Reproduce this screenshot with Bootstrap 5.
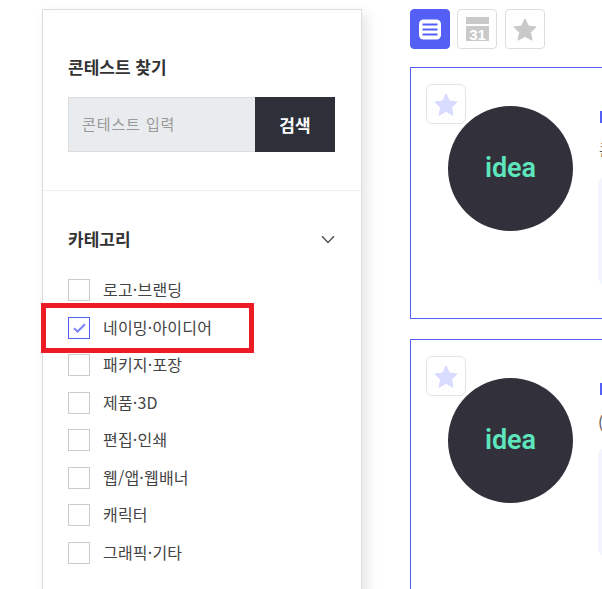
<!DOCTYPE html>
<html lang="ko">
<head>
  <meta charset="UTF-8" />
  <meta name="viewport" content="width=device-width, initial-scale=1.0" />
  <title>콘테스트 찾기</title>
  <link href="https://cdn.jsdelivr.net/npm/bootstrap@5.3.3/dist/css/bootstrap.min.css" rel="stylesheet" />
  <style>
    html, body {
      height: 589px;
      overflow: hidden;
    }
    body {
      font-family: "Noto Sans CJK KR", "Noto Sans", sans-serif;
      background: #fff;
      color: #333;
    }
    .page-wrap {
      width: 602px;
      height: 589px;
      overflow: hidden;
      padding: 9px 0 0 42px;
      gap: 48px;
    }
    .side-panel {
      width: 320px;
      flex: none;
      height: 640px;
      border: 1px solid #ddd;
      box-shadow: 5px 5px 12px rgba(0, 0, 0, .1);
    }
    .search-box {
      padding: 45px 26px 38px 25px;
      border-bottom: 1px solid #eee;
    }
    .panel-title {
      font-size: 17px;
      font-weight: 700;
      line-height: 24px;
      color: #333;
    }
    .search-row {
      height: 55px;
      margin-top: 18px;
    }
    .search-input {
      flex: 1;
      min-width: 0;
      background: #e9ecef;
      border: 1px solid #ddd;
      border-right: 0;
      border-radius: 0;
      padding: 0 13px;
      font-size: 15px;
      letter-spacing: .9px;
    }
    .search-input::placeholder {
      color: #999;
      opacity: 1;
    }
    .search-btn {
      width: 80px;
      background: #2d3039;
      color: #fff;
      font-size: 17px;
      font-weight: 700;
      border: 0;
      border-radius: 0;
    }
    .cat-box {
      padding: 36px 26px 0 25px;
    }
    .cat-list {
      margin-top: 28px;
      gap: 15.5px;
    }
    .cat-item {
      height: 22px;
      gap: 13px;
      font-size: 16px;
      letter-spacing: .2px;
      line-height: 22px;
      color: #444;
    }
    .cat-name {
      margin-top: -2px;
    }
    .tick-box {
      width: 22px;
      height: 22px;
      flex: none;
      border: 1px solid #ccc;
      background: #fff;
    }
    .tick-box.on {
      border-color: #5460f5;
    }
    .red-mark {
      position: absolute;
      left: -2px;
      top: 293px;
      width: 213px;
      height: 50px;
      border: 5px solid #ed1c24;
    }
    .view-btns {
      gap: 7px;
      height: 40px;
    }
    .view-btn {
      width: 40px;
      height: 40px;
      border: 1px solid #ddd;
      border-radius: 4px;
      background: #fff;
    }
    .view-btn:last-child {
      margin-left: 1px;
    }
    .view-btn.on {
      background: #5460f5;
      border-color: #5460f5;
    }
    .contest-col {
      width: 300px;
      flex: none;
    }
    .contest-item {
      width: 300px;
      height: 252px;
      margin-top: 18px;
      border: 1px solid #5460f5;
    }
    .contest-item + .contest-item {
      margin-top: 20px;
      height: 300px;
    }
    .star-btn {
      position: absolute;
      left: 15px;
      top: 16px;
      width: 40px;
      height: 40px;
      border: 1px solid #e4e4e4;
      border-radius: 6px;
      background: #fff;
      z-index: 2;
    }
    .idea-logo {
      position: absolute;
      left: 37px;
      top: 38px;
      width: 125px;
      height: 125px;
      padding-bottom: 1px;
      background: #32303b;
      color: #5de6bb;
      font-family: Roboto, sans-serif;
      font-size: 27px;
      font-weight: 600;
    }
    .item-tag {
      position: absolute;
      left: 189px;
      top: 43px;
      width: 12px;
      height: 12px;
      background: #5460f5;
    }
    .item-text {
      position: absolute;
      left: 188px;
      top: 70px;
      font-size: 16px;
      line-height: 22px;
      white-space: nowrap;
      color: #555;
    }
    .contest-item + .contest-item .item-text {
      left: 187px;
      top: 71px;
    }
    .item-note {
      position: absolute;
      left: 187px;
      top: 109px;
      width: 130px;
      height: 108px;
      background: #f2f4fe;
      border-radius: 8px;
    }
    .contest-item + .contest-item .item-note {
      top: 108px;
    }
  </style>
</head>
<body>

  <div class="page-wrap d-flex">

    <!-- left filter panel -->
    <div class="side-panel position-relative bg-white">
      <div class="search-box">
        <div class="panel-title">콘테스트 찾기</div>
        <div class="search-row d-flex">
          <input type="text" class="search-input form-control" placeholder="콘테스트 입력" />
          <button type="button" class="search-btn btn">검색</button>
        </div>
      </div>

      <div class="cat-box">
        <div class="d-flex justify-content-between align-items-center">
          <div class="panel-title">카테고리</div>
          <svg width="14" height="9" viewBox="0 0 14 9"><path d="M1 1.2 7 7.4l6-6.2" fill="none" stroke="#555" stroke-width="1.5"/></svg>
        </div>
        <div class="cat-list d-flex flex-column">
          <div class="cat-item d-flex align-items-center"><span class="tick-box"></span><span class="cat-name">로고·브랜딩</span></div>
          <div class="cat-item d-flex align-items-center">
            <span class="tick-box on d-flex align-items-center justify-content-center">
              <svg width="13" height="10" viewBox="0 0 13 10"><path d="M1 5.2 4.6 8.5 12 1.2" fill="none" stroke="#7a83f7" stroke-width="2"/></svg>
            </span><span class="cat-name">네이밍·아이디어</span>
          </div>
          <div class="cat-item d-flex align-items-center"><span class="tick-box"></span><span class="cat-name">패키지·포장</span></div>
          <div class="cat-item d-flex align-items-center"><span class="tick-box"></span><span class="cat-name">제품·3D</span></div>
          <div class="cat-item d-flex align-items-center"><span class="tick-box"></span><span class="cat-name">편집·인쇄</span></div>
          <div class="cat-item d-flex align-items-center"><span class="tick-box"></span><span class="cat-name">웹/앱·웹배너</span></div>
          <div class="cat-item d-flex align-items-center"><span class="tick-box"></span><span class="cat-name">캐릭터</span></div>
          <div class="cat-item d-flex align-items-center"><span class="tick-box"></span><span class="cat-name">그래픽·기타</span></div>
        </div>
      </div>

      <!-- highlight drawn over the list -->
      <div class="red-mark"></div>
    </div>

    <!-- right contest list -->
    <div class="contest-col">
      <div class="view-btns d-flex">
        <div class="view-btn on d-flex align-items-center justify-content-center">
          <svg width="24" height="21" viewBox="0 0 24 21">
            <rect x="1" y="0.5" width="22" height="20" rx="4.5" fill="#fff"/>
            <path d="M4.5 5.5h15M4.5 10.5h15M4.5 15.5h15" stroke="#5460f5" stroke-width="2.2"/>
          </svg>
        </div>
        <div class="view-btn d-flex align-items-center justify-content-center">
          <svg width="23" height="24" viewBox="0 0 23 24">
            <rect width="23" height="7" fill="#c9c9c9"/>
            <rect y="9" width="23" height="15" fill="#c9c9c9"/>
            <text x="11.5" y="22.5" text-anchor="middle" font-family="Liberation Sans" font-weight="700" font-size="15" fill="#fff">31</text>
          </svg>
        </div>
        <div class="view-btn d-flex align-items-center justify-content-center">
          <svg width="24" height="23" viewBox="0 0 24 23"><path d="M12 .8l3.4 7.2 7.8 1-5.7 5.4 1.5 7.8L12 18.4l-7 3.8 1.5-7.8L.8 9l7.8-1z" fill="#c9c9c9" stroke="#c9c9c9" stroke-linejoin="round"/></svg>
        </div>
      </div>

      <div class="contest-item position-relative overflow-hidden">
        <div class="star-btn d-flex align-items-center justify-content-center">
          <svg width="24" height="23" viewBox="0 0 24 23"><path d="M12 .8l3.4 7.2 7.8 1-5.7 5.4 1.5 7.8L12 18.4l-7 3.8 1.5-7.8L.8 9l7.8-1z" fill="#d9dbff" stroke="#d9dbff" stroke-linejoin="round"/></svg>
        </div>
        <div class="idea-logo rounded-circle d-flex align-items-center justify-content-center">idea</div>
        <div class="item-tag"></div>
        <div class="item-text">콘</div>
        <div class="item-note"></div>
      </div>

      <div class="contest-item position-relative overflow-hidden">
        <div class="star-btn d-flex align-items-center justify-content-center">
          <svg width="24" height="23" viewBox="0 0 24 23"><path d="M12 .8l3.4 7.2 7.8 1-5.7 5.4 1.5 7.8L12 18.4l-7 3.8 1.5-7.8L.8 9l7.8-1z" fill="#d9dbff" stroke="#d9dbff" stroke-linejoin="round"/></svg>
        </div>
        <div class="idea-logo rounded-circle d-flex align-items-center justify-content-center">idea</div>
        <div class="item-tag"></div>
        <div class="item-text">(</div>
        <div class="item-note"></div>
      </div>
    </div>

  </div>

  <script src="https://cdn.jsdelivr.net/npm/bootstrap@5.3.3/dist/js/bootstrap.bundle.min.js"></script>
</body>
</html>
